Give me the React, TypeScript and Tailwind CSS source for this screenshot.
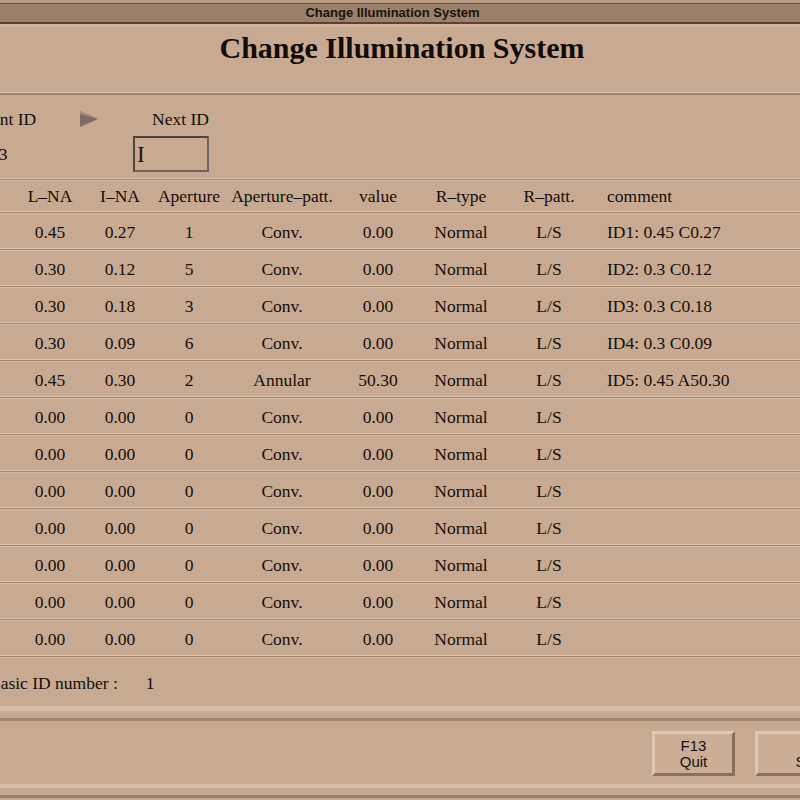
import React from "react";

type Row = {
  lna: string;
  ina: string;
  ap: string;
  patt: string;
  value: string;
  comment: string;
};

const rows: Row[] = [
  { lna: "0.45", ina: "0.27", ap: "1", patt: "Conv.", value: "0.00", comment: "ID1: 0.45 C0.27" },
  { lna: "0.30", ina: "0.12", ap: "5", patt: "Conv.", value: "0.00", comment: "ID2: 0.3 C0.12" },
  { lna: "0.30", ina: "0.18", ap: "3", patt: "Conv.", value: "0.00", comment: "ID3: 0.3 C0.18" },
  { lna: "0.30", ina: "0.09", ap: "6", patt: "Conv.", value: "0.00", comment: "ID4: 0.3 C0.09" },
  { lna: "0.45", ina: "0.30", ap: "2", patt: "Annular", value: "50.30", comment: "ID5: 0.45 A50.30" },
  ...Array.from({ length: 7 }, () => ({
    lna: "0.00",
    ina: "0.00",
    ap: "0",
    patt: "Conv.",
    value: "0.00",
    comment: "",
  })),
];

const cols = "grid grid-cols-[20px_60px_80px_58px_128px_64px_102px_74px_1fr]";

function Groove() {
  return (
    <div className="flex flex-col">
      <div className="h-px bg-[#dcc3ad]" />
      <div className="h-px bg-[#a3866f]" />
      <div className="h-px bg-[#d3b9a2]" />
    </div>
  );
}

function Cell({ children }: { children: React.ReactNode }) {
  return <div className="flex justify-center whitespace-nowrap">{children}</div>;
}

function Button({ top, bottom, width }: { top: string; bottom: string; width: string }) {
  return (
    <div
      className={`${width} h-[45px] flex flex-col items-center justify-center border-[3px] border-t-[#dfc7b1] border-l-[#dfc7b1] border-b-[#8d705c] border-r-[#8d705c] bg-[#ccae97] text-[15px] leading-[16px] text-[#111]`}
      style={{ fontFamily: '"Liberation Sans", Arial, sans-serif' }}>
      <span>{top}</span>
      <span>{bottom}</span>
    </div>
  );
}

export default function App() {
  return (
    <div
      className="w-[800px] h-[800px] overflow-hidden bg-[#c8aa92] text-[#140e0a] text-[17.5px]"
      style={{ fontFamily: '"Liberation Serif", "Times New Roman", serif' }}>
      {/* window frame + title bar */}
      <div className="h-[3px] bg-[#bb9d87]" />
      <div className="h-px bg-[#6e5040]" />
      <div
        className="h-[18px] bg-[#9b806b] flex items-center justify-center pr-[15px] text-[13px] font-bold text-[#1c120c]"
        style={{ fontFamily: '"Liberation Sans", Arial, sans-serif' }}>
        Change Illumination System
      </div>
      <div className="h-[2px] bg-[#5e3f30]" />
      <div className="h-[3px] bg-[#d4b69e]" />

      <div className="h-[65px] pt-[3px] pl-[4px] flex justify-center">
        <h1 className="text-[30px] leading-[35px] font-bold text-[#120c08]">
          Change Illumination System
        </h1>
      </div>

      <div className="h-px bg-[#dcc2ab]" />
      <div className="h-[2px] bg-[#a3856f]" />

      {/* ID selector */}
      <div className="h-[83px] pt-[12px] flex -ml-[42px]">
        <div className="w-[80px] flex flex-col">
          <div className="h-[24px] flex items-center justify-center whitespace-nowrap">Current ID</div>
          <div className="h-[41px] pt-[5px] flex items-center justify-center pl-[10px]">3</div>
        </div>
        <div className="w-[42px]" />
        <div className="w-[18px] h-[24px] flex items-center">
          <svg width="18" height="16" viewBox="0 0 18 16">
            <polygon points="0,0 18,8 0,16" fill="#7d6c66" />
            <polygon points="0,0 18,8 0,3" fill="#a08d85" />
          </svg>
        </div>
        <div className="w-[35px]" />
        <div className="w-[76px] flex flex-col">
          <div className="h-[24px] flex items-center pl-[19px] whitespace-nowrap">Next ID</div>
          <div className="mt-[5px] h-[36px] border-2 border-t-[#4d4440] border-l-[#4d4440] border-b-[#6f6560] border-r-[#6f6560] flex items-center pl-[2px]">
            <span className="text-[23px] leading-none text-[#1a1410]">I</span>
          </div>
        </div>
      </div>

      <Groove />

      {/* table header */}
      <div className={`${cols} h-[30px] items-center`}>
        <div />
        <Cell>L–NA</Cell>
        <Cell>I–NA</Cell>
        <Cell>Aperture</Cell>
        <Cell>Aperture–patt.</Cell>
        <Cell>value</Cell>
        <Cell>R–type</Cell>
        <Cell>R–patt.</Cell>
        <div className="pl-[21px]">comment</div>
      </div>
      <Groove />

      {rows.map((r, i) => (
        <div key={i}>
          <div className={`${cols} h-[34px] items-center pt-[3px]`}>
            <div />
            <Cell>{r.lna}</Cell>
            <Cell>{r.ina}</Cell>
            <Cell>{r.ap}</Cell>
            <Cell>{r.patt}</Cell>
            <Cell>{r.value}</Cell>
            <Cell>Normal</Cell>
            <Cell>L/S</Cell>
            <div className="pl-[21px] whitespace-nowrap">{r.comment}</div>
          </div>
          <Groove />
        </div>
      ))}

      <div className="h-[48px] pt-[3px] flex items-center -ml-[11px] gap-[28px]">
        <span className="whitespace-nowrap">Basic ID number :</span>
        <span>1</span>
      </div>

      {/* button panel */}
      <div className="h-[5px] bg-[#d8bea7]" />
      <div className="h-[7px]" />
      <div className="h-[3px] bg-[#a4866f]" />
      <div className="h-[63px] pt-[10px] flex gap-[20px] pl-[652px]">
        <Button top="F13" bottom="Quit" width="w-[83px] shrink-0" />
        <Button top="F14" bottom="Save" width="w-[115px] shrink-0" />
      </div>
      <div className="h-[4px] bg-[#d8bea7]" />
      <div className="h-[7px]" />
      <div className="h-[3px] bg-[#9c7e69]" />
    </div>
  );
}
